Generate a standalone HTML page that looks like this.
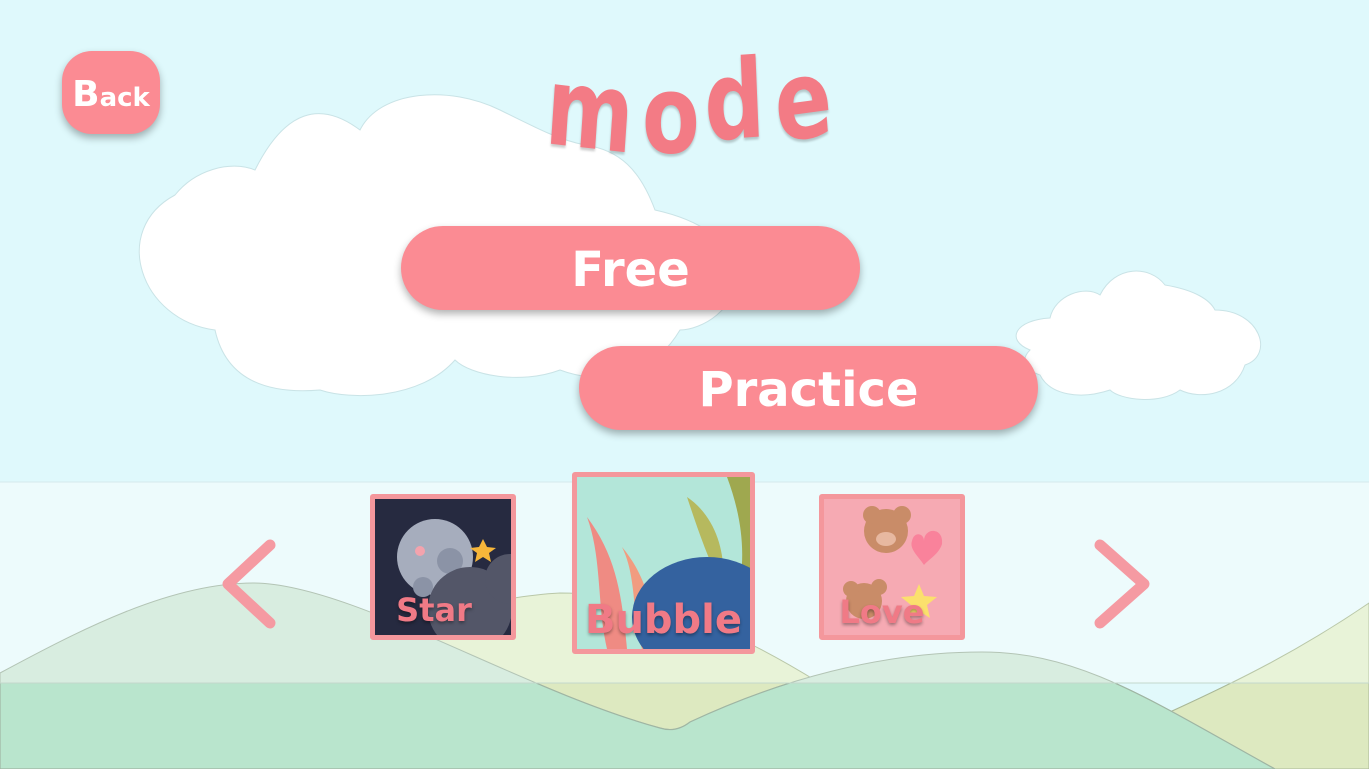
<!DOCTYPE html>
<html><head><meta charset="utf-8"><style>
html,body{margin:0;padding:0}
body{width:1369px;height:769px;overflow:hidden;position:relative;background:#dff9fc;font-family:"Comic Sans MS","DejaVu Sans","Liberation Sans",sans-serif}
.abs{position:absolute}
.btn{position:absolute;background:#fb8b93;border-radius:44px;box-shadow:0 4px 8px rgba(0,0,0,.3);color:#fff;font-weight:bold;text-align:center}
.card{position:absolute;border:5px solid #f4979c;border-radius:3px;overflow:hidden;box-sizing:border-box}
.lbl{position:absolute;left:0;right:0;text-align:center;color:#f07a86;font-weight:bold;text-shadow:0 2px 3px rgba(0,0,0,.35)}
.ml{position:absolute;color:#f37b85;font-family:"DejaVu Sans",sans-serif;font-weight:bold;font-size:84px;text-shadow:0 2px 2px rgba(0,0,0,.2);line-height:1;transform-origin:50% 0}
</style></head><body>
<svg class="abs" style="left:0;top:0" width="1369" height="769">
 <defs><clipPath id="lo"><rect x="0" y="683" width="1369" height="86"/></clipPath></defs>
 <rect x="0" y="482" width="1369" height="201" fill="#edfbfc"/>
 <rect x="0" y="683" width="1369" height="86" fill="#e1f9fb"/>
 <line x1="0" y1="482" x2="1369" y2="482" stroke="#d5e9ec"/>
 <path d="M215 330 C140 320 110 230 175 195 C195 170 230 160 255 170 C285 110 320 100 360 130 C380 90 450 85 500 110 C540 130 560 140 585 145 C620 150 640 170 655 210 C700 220 730 240 735 270 C740 310 700 330 680 330 C650 380 600 385 560 370 C520 385 470 375 455 360 C420 400 350 400 320 390 C260 395 225 375 215 330Z" fill="#fff" stroke="#c9e3e6"/>
 <path d="M1030 350 C1005 340 1015 320 1050 318 C1055 295 1085 285 1100 295 C1115 265 1150 265 1165 285 C1195 290 1210 300 1215 310 C1260 310 1275 355 1245 365 C1235 395 1200 400 1180 390 C1160 405 1120 400 1110 390 C1080 400 1050 395 1040 375 C1025 370 1020 360 1030 350Z" fill="#fff" stroke="#c9e3e6"/>
 <path d="M0 769 L0 720 C200 700 420 600 560 593 C660 593 750 640 818 682 C860 710 900 740 940 769 Z" fill="#e8f3d8" stroke="#b9c7a8"/>
 <path d="M1170 712 C1240 680 1300 650 1369 603 L1369 769 L1170 769Z" fill="#e8f3d8" stroke="#b9c7a8"/>
 <g clip-path="url(#lo)">
  <path d="M0 769 L0 720 C200 700 420 600 560 593 C660 593 750 640 818 682 C860 710 900 740 940 769 Z" fill="#dde9c0"/>
  <path d="M1170 712 C1240 680 1300 650 1369 603 L1369 769 L1170 769Z" fill="#dde9c0" stroke="#a9b898"/>
 </g>
 <path d="M0 673 C80 630 170 583 253 583 C350 583 520 690 660 728 Q676 733 690 722 C780 680 880 652 982 652 C1080 652 1150 700 1275 769 L0 769Z" fill="#d8ede0" stroke="#b3c4b5"/>
 <path clip-path="url(#lo)" d="M0 673 C80 630 170 583 253 583 C350 583 520 690 660 728 Q676 733 690 722 C780 680 880 652 982 652 C1080 652 1150 700 1275 769 L0 769Z" fill="#b9e5cd" stroke="#9fb5a3" stroke-width="1.2"/>
 <line x1="0" y1="683" x2="1369" y2="683" stroke="#c4d8cc"/>
 <path d="M270 545 L228 584 L270 623" fill="none" stroke="#f59aa2" stroke-width="11" stroke-linecap="round" stroke-linejoin="round"/>
 <path d="M1100 545 L1144 584 L1100 623" fill="none" stroke="#f59aa2" stroke-width="11" stroke-linecap="round" stroke-linejoin="round"/>
</svg>

<div class="btn" style="left:62px;top:51px;width:98px;height:83px;border-radius:30px;font-size:36px;line-height:88px">B<span style="font-size:26px">ack</span></div>
<span class="ml" style="left:550px;top:56px;transform:scaleY(1.3) rotate(5deg)">m</span>
<span class="ml" style="left:642px;top:60px;transform:scaleY(1.3)">o</span>
<span class="ml" style="left:702px;top:46px;transform:scaleY(1.3) rotate(-3deg)">d</span>
<span class="ml" style="left:770px;top:46px;transform:scaleY(1.3) rotate(-6deg)">e</span>
<div class="btn" style="left:401px;top:226px;width:459px;height:84px;font-size:48px;line-height:88px">Free</div>
<div class="btn" style="left:579px;top:346px;width:459px;height:84px;font-size:48px;line-height:88px">Practice</div>

<div class="card" style="left:370px;top:494px;width:146px;height:146px;background:#262a40">
 <svg width="136" height="136" class="abs" style="left:0;top:0">
  <circle cx="60" cy="58" r="38" fill="#a6adbd"/>
  <circle cx="75" cy="62" r="13" fill="#8b93a6"/><circle cx="48" cy="88" r="10" fill="#8b93a6"/>
  <circle cx="45" cy="52" r="5" fill="#f3a3ad"/>
  <path d="M108 40 l4 8 9 1 -7 5 2 9 -8 -5 -8 5 2 -9 -7 -5 9 -1z" fill="#f7b63a"/>
  <circle cx="95" cy="110" r="42" fill="#535668"/><circle cx="135" cy="80" r="25" fill="#535668"/>
 </svg>
 <div class="lbl" style="top:92px;font-size:32px;left:-18px">Star</div>
</div>
<div class="card" style="left:572px;top:472px;width:183px;height:182px;background:#b3e6d9">
 <svg width="173" height="172" class="abs" style="left:0;top:0">
  <path d="M110 20 C140 40 150 80 145 110 C130 80 120 50 110 20Z" fill="#b6b95e"/>
  <path d="M150 0 C165 40 170 80 160 120 L173 120 L173 0Z" fill="#9fa84f"/>
  <path d="M10 40 C25 80 20 130 30 172 L50 172 C45 120 40 80 10 40Z" fill="#ef8b83"/>
  <path d="M45 70 C60 100 55 140 65 172 L80 172 C75 130 70 100 45 70Z" fill="#f19c80"/>
  <ellipse cx="130" cy="140" rx="75" ry="60" fill="#34629f"/>
 </svg>
 <div class="lbl" style="top:120px;font-size:40px">Bubble</div>
</div>
<div class="card" style="left:819px;top:494px;width:146px;height:146px;background:#f6aab3">
 <svg width="136" height="136" class="abs" style="left:0;top:0">
  <circle cx="62" cy="32" r="22" fill="#c98c68"/><circle cx="48" cy="16" r="9" fill="#c98c68"/><circle cx="78" cy="16" r="9" fill="#c98c68"/>
  <ellipse cx="62" cy="40" rx="10" ry="7" fill="#e7b8a0"/>
  <path d="M100 42 C100 28 120 28 118 45 C115 55 105 60 100 66 C95 58 85 50 88 42 C90 32 100 34 100 42Z" fill="#f9829b"/>
  <circle cx="40" cy="102" r="18" fill="#c98c68"/><circle cx="27" cy="90" r="8" fill="#c98c68"/><circle cx="55" cy="88" r="8" fill="#c98c68"/>
  <path d="M95 85 l5 12 13 1 -10 8 3 13 -11 -7 -11 7 3 -13 -10 -8 13 -1z" fill="#fbe06d"/>
 </svg>
 <div class="lbl" style="top:94px;font-size:32px;left:-20px">Love</div>
</div>
</body></html>
